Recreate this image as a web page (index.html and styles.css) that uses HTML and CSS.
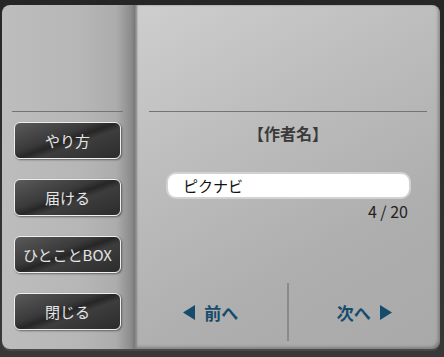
FILE: index.html
```html
<!DOCTYPE html>
<html>
<head>
  <title>ピクナビ</title>
  <link rel="stylesheet" href="styles.css">
</head>
<body>
  <div class="book">
    <div class="side">
      <div class="rule"></div>
      <button class="menu-btn">やり方</button>
      <button class="menu-btn">届ける</button>
      <button class="menu-btn">ひとことBOX</button>
      <button class="menu-btn">閉じる</button>
    </div>

    <div class="main">
      <div class="rule"></div>
      <h2 class="author">【作者名】</h2>
      <div class="name-box">ピクナビ</div>
      <div class="count">4 / 20</div>

      <div class="nav">
        <a class="nav-link">
          <svg class="arrow" width="12" height="15" viewBox="0 0 12 15"><polygon points="12,0 12,15 0,7.5" fill="#174b6c"/></svg>
          前へ
        </a>
        <div class="nav-divider"></div>
        <a class="nav-link">
          次へ
          <svg class="arrow" width="12" height="15" viewBox="0 0 12 15"><polygon points="0,0 0,15 12,7.5" fill="#174b6c"/></svg>
        </a>
      </div>
    </div>
  </div>
</body>
</html>
```

FILE: styles.css
```css
html, body {
  margin: 0;
  padding: 0;
}

body {
  width: 444px;
  height: 357px;
  background: linear-gradient(#262626, #383838);
  font-family: "Noto Sans CJK JP", "Noto Sans", sans-serif;
  overflow: hidden;
}

.book {
  display: flex;
  margin: 5px 4px 0 2px;
  height: 344px;
  border-radius: 8px;
  box-shadow: 0 2px 1px #4a4a4a;
}

.side {
  width: 133px;
  display: flex;
  flex-direction: column;
  padding: 0 12px 0 10px;
  box-sizing: border-box;
  border-radius: 8px 0 0 8px;
  background: linear-gradient(90deg, #bdbdbd 0%, #b6b6b6 60%, #acacac 86%, #8c8c8c 97%, #787878 100%);
}

.rule {
  height: 1px;
  margin-top: 106px;
  background-color: #747474;
}

.menu-btn {
  height: 37px;
  margin: 10px 2px 10px 2px;
  padding: 0;
  border: 1px solid #f0f0f0;
  border-radius: 6px;
  background: linear-gradient(160deg, #5a5a5a 0%, #3a3a3a 40%, #262626 50%, #3d3d3d 60%, #2c2c2c 100%);
  box-shadow: 1px 1px 2px rgba(0, 0, 0, 0.45);
  color: #e6e6e6;
  font-family: "Noto Sans CJK JP", "Noto Sans", sans-serif;
  font-size: 15px;
  line-height: 20px;
}

.menu-btn + .menu-btn {
  margin-top: 10px;
}

.main {
  flex: 1;
  display: flex;
  flex-direction: column;
  padding: 0 13px 0 14px;
  border-radius: 0 8px 8px 0;
  background: linear-gradient(150deg, #cecece 0%, #bdbdbd 35%, #aeaeae 70%, #a9a9a9 100%);
  box-shadow: inset 2px 0 2px #858585, inset -2px -2px 3px rgba(0, 0, 0, 0.25);
}

.author {
  margin: 10px 0 0 0;
  text-align: center;
  font-size: 16px;
  line-height: 23px;
  font-weight: bold;
  color: #3a3a3a;
}

.name-box {
  margin: 27px 16px 0 17px;
  height: 23px;
  padding: 0 15px;
  border: 2px solid #d2d2d2;
  border-radius: 10px;
  background-color: #fff;
  font-size: 15px;
  line-height: 23px;
  color: #111;
}

.count {
  margin: 3px 19px 0 0;
  text-align: right;
  font-size: 16px;
  line-height: 19px;
  color: #222;
}

.nav {
  margin: auto -13px 8px -14px;
  height: 58px;
  display: flex;
  align-items: center;
}

.nav-link {
  flex: 1;
  display: flex;
  align-items: center;
  justify-content: center;
  gap: 9px;
  color: #174b6c;
  font-size: 17px;
  font-weight: bold;
}

.nav-divider {
  width: 2px;
  height: 58px;
  background-color: #8a8a8a;
}
```
